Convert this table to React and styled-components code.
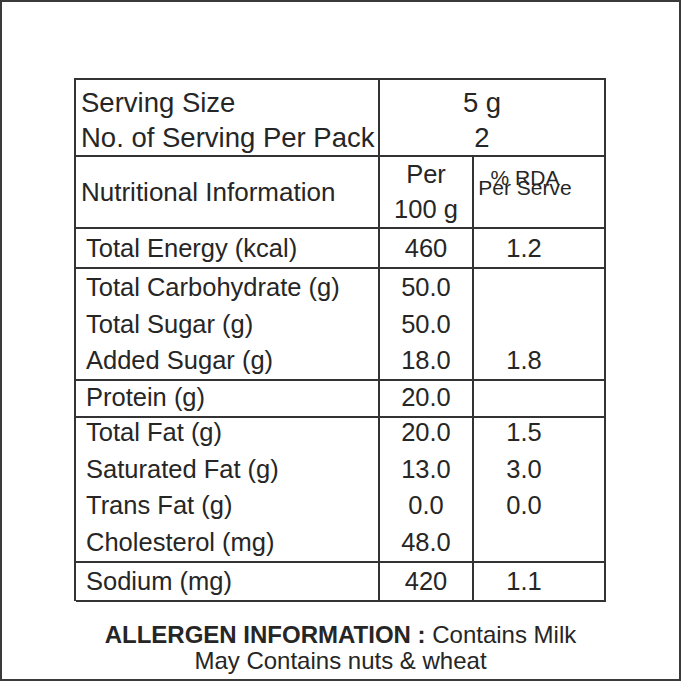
import React from "react";
import styled, { createGlobalStyle } from "styled-components";

const ink = "#262626";
const rule = "#333";

const GlobalStyle = createGlobalStyle`
  html, body {
    margin: 0;
    padding: 0;
    background: #fff;
  }
  body {
    font-family: "Liberation Sans", Arial, sans-serif;
    color: ${ink};
  }
`;

const rows = [
  { height: 40, items: [["Total Energy (kcal)", "460", "1.2"]] },
  {
    height: 110,
    items: [
      ["Total Carbohydrate (g)", "50.0", ""],
      ["Total Sugar (g)", "50.0", ""],
      ["Added Sugar (g)", "18.0", "1.8"],
    ],
  },
  { height: 34, items: [["Protein (g)", "20.0", ""]] },
  {
    height: 150,
    items: [
      ["Total Fat (g)", "20.0", "1.5"],
      ["Saturated Fat (g)", "13.0", "3.0"],
      ["Trans Fat (g)", "0.0", "0.0"],
      ["Cholesterol (mg)", "48.0", ""],
    ],
  },
  { height: 38, items: [["Sodium (mg)", "420", "1.1"]] },
];

export default function App() {
  return (
    <>
      <GlobalStyle />
      <Frame>
        <Table>
          <Row $height={77}>
            <Cell $pad="4px 0 0 5px">
              <HeadLine>Serving Size</HeadLine>
              <HeadLine>No. of Serving Per Pack</HeadLine>
            </Cell>
            <Cell $span={2} $center $pad="4px 20px 0 0">
              <HeadLine>5 g</HeadLine>
              <HeadLine>2</HeadLine>
            </Cell>
          </Row>

          <Row $height={72}>
            <Cell $pad="0 0 0 5px">
              <InfoTitle>Nutritional Information</InfoTitle>
            </Cell>
            <Cell $center>
              <SubHead>Per</SubHead>
              <SubHead>100 g</SubHead>
            </Cell>
            <Cell $center $pad="0 28px 18px 0">
              <RdaLine>% RDA</RdaLine>
              <RdaLine>Per Serve</RdaLine>
            </Cell>
          </Row>

          {rows.map((group, i) => (
            <Row key={i} $height={group.height}>
              <Cell $pad="0 0 0 10px">
                {group.items.map((it) => (
                  <Line key={it[0]}>{it[0]}</Line>
                ))}
              </Cell>
              <Cell $center>
                {group.items.map((it) => (
                  <Line key={it[0]}>{it[1]}</Line>
                ))}
              </Cell>
              <Cell $center $pad="0 30px 0 0">
                {group.items.map((it) => (
                  <Line key={it[0]}>{it[2] || "\u00a0"}</Line>
                ))}
              </Cell>
            </Row>
          ))}
        </Table>

        <Allergen>
          <div>
            <strong>ALLERGEN INFORMATION :</strong> Contains Milk
          </div>
          <div>May Contains nuts &amp; wheat</div>
        </Allergen>
      </Frame>
    </>
  );
}

const Frame = styled.div`
  box-sizing: border-box;
  width: 681px;
  height: 681px;
  border: 2px solid #3a3a3a;
  display: flex;
  flex-direction: column;
  align-items: center;
  padding-top: 76px;
`;

const Table = styled.div`
  display: flex;
  flex-direction: column;
  width: 532px;
  box-sizing: border-box;
  border-top: 2px solid ${rule};
  border-left: 2px solid ${rule};
  margin-left: -1px;
`;

const Row = styled.div`
  display: grid;
  grid-template-columns: 304px 94px 132px;
  height: ${(p) => p.$height}px;
`;

const Cell = styled.div`
  grid-column: span ${(p) => p.$span || 1};
  box-sizing: border-box;
  border-right: 2px solid ${rule};
  border-bottom: 2px solid ${rule};
  display: flex;
  flex-direction: column;
  justify-content: center;
  align-items: ${(p) => (p.$center ? "center" : "flex-start")};
  padding: ${(p) => p.$pad || "0"};
  white-space: nowrap;
`;

const HeadLine = styled.div`
  font-size: 27.5px;
  line-height: 35px;
`;

const InfoTitle = styled.div`
  font-size: 26px;
  line-height: 34px;
`;

const SubHead = styled.div`
  font-size: 25.5px;
  line-height: 35px;
`;

const RdaLine = styled.div`
  font-size: 21px;
  line-height: 10px;
`;

const Line = styled.div`
  font-size: 25.5px;
  line-height: 36.5px;
`;

const Allergen = styled.div`
  margin-top: 21px;
  text-align: center;
  font-size: 24px;
  line-height: 26px;
  color: ${ink};

  strong {
    font-weight: bold;
  }
`;
